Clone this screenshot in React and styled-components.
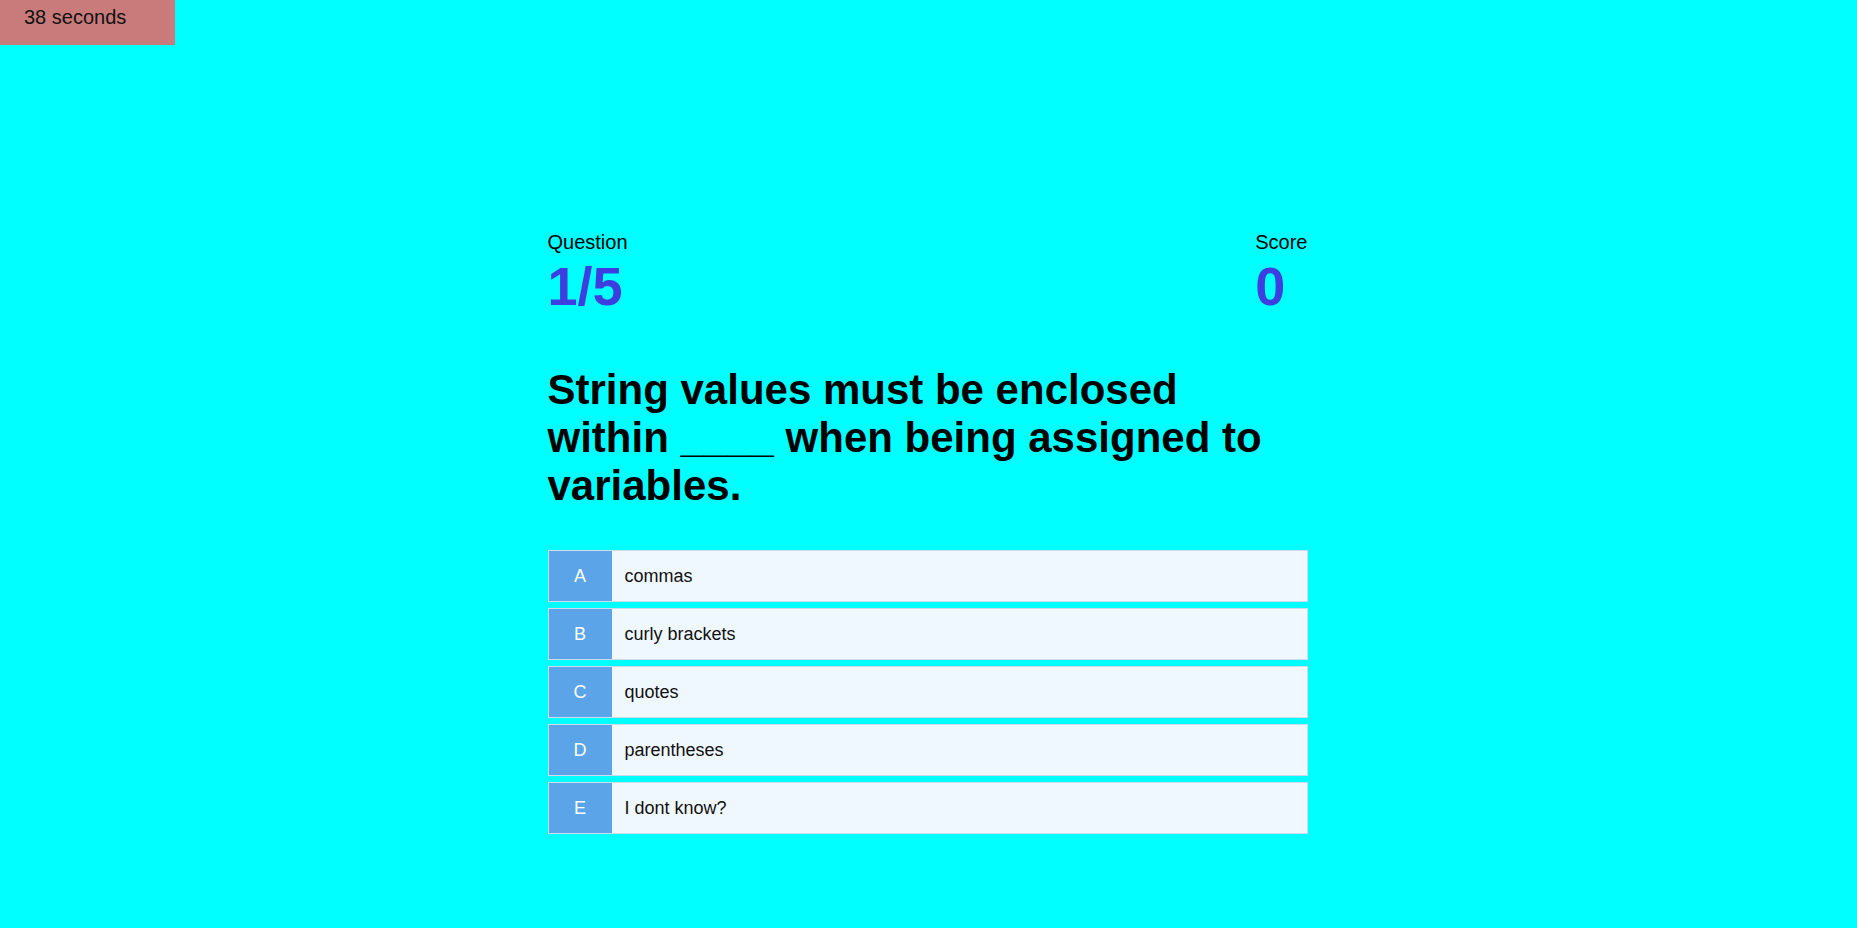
import React from "react";
import styled, { createGlobalStyle } from "styled-components";

const GlobalStyle = createGlobalStyle`
  html, body {
    margin: 0;
    padding: 0;
    background: #00ffff;
    font-family: "Liberation Sans", Arial, sans-serif;
    color: #000;
  }
`;

const Page = styled.div`
  min-height: 928px;
  background: #00ffff;
  display: flex;
  flex-direction: column;
`;

const Timer = styled.div`
  width: 175px;
  height: 45px;
  box-sizing: border-box;
  padding: 6px 24px;
  background: #c97b7b;
  color: #111;
  font-size: 20px;
  line-height: 23px;
`;

const Quiz = styled.main`
  width: 762px;
  box-sizing: border-box;
  padding-right: 2px;
  margin: 186px auto 0;
  display: flex;
  flex-direction: column;
`;

const Header = styled.div`
  display: flex;
  justify-content: space-between;
`;

const Stat = styled.div`
  display: flex;
  flex-direction: column;
`;

const StatLabel = styled.span`
  font-size: 20px;
  line-height: 23px;
`;

const StatValue = styled.span`
  font-size: 54px;
  line-height: 64px;
  font-weight: bold;
  color: #3e3ee0;
`;

const QuestionText = styled.h1`
  margin: 48px 0 40px;
  font-size: 42px;
  line-height: 48px;
  font-weight: bold;
  max-width: 730px;
`;

const Choices = styled.ul`
  list-style: none;
  margin: 0;
  padding: 0;
  display: flex;
  flex-direction: column;
  gap: 6px;
`;

const Choice = styled.li`
  display: flex;
  height: 52px;
  box-sizing: border-box;
  border: 1px solid #cfdaf0;
  background: #f0f8ff;
  cursor: pointer;
`;

const Letter = styled.span`
  width: 63px;
  flex: none;
  display: flex;
  align-items: center;
  justify-content: center;
  background: #5ba4e8;
  color: #fff;
  font-size: 18px;
`;

const ChoiceText = styled.span`
  display: flex;
  align-items: center;
  padding-left: 13px;
  font-size: 18px;
  color: #111;
`;

const choices = [
  ["A", "commas"],
  ["B", "curly brackets"],
  ["C", "quotes"],
  ["D", "parentheses"],
  ["E", "I dont know?"],
];

export default function App() {
  return (
    <Page>
      <GlobalStyle />
      <Timer>38 seconds</Timer>
      <Quiz>
        <Header>
          <Stat>
            <StatLabel>Question</StatLabel>
            <StatValue>1/5</StatValue>
          </Stat>
          <Stat>
            <StatLabel>Score</StatLabel>
            <StatValue>0</StatValue>
          </Stat>
        </Header>
        <QuestionText>
          String values must be enclosed within ____ when being assigned to variables.
        </QuestionText>
        <Choices>
          {choices.map(([l, t]) => (
            <Choice key={l}>
              <Letter>{l}</Letter>
              <ChoiceText>{t}</ChoiceText>
            </Choice>
          ))}
        </Choices>
      </Quiz>
    </Page>
  );
}
